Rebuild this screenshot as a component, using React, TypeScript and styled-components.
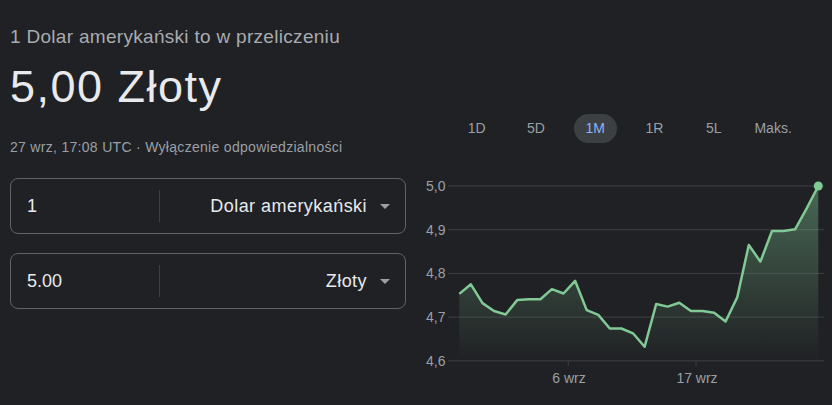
import styled, { createGlobalStyle } from 'styled-components';

const GlobalStyle = createGlobalStyle`
  html, body {
    margin: 0;
    padding: 0;
    background: #202124;
    font-family: "Liberation Sans", Arial, sans-serif;
  }
`;

const Page = styled.div`
  width: 832px;
  height: 405px;
  background: #202124;
  display: flex;
  gap: 14px;
  overflow: hidden;
`;

const LeftCol = styled.div`
  flex: none;
  width: 396px;
  padding-left: 10px;
  padding-top: 25px;
  display: flex;
  flex-direction: column;
`;

const Caption = styled.div`
  font-size: 19px;
  line-height: 24px;
  letter-spacing: 0.3px;
  color: #a8abb0;
  white-space: nowrap;
`;

const BigValue = styled.div`
  font-size: 45px;
  line-height: 52px;
  color: #e8eaed;
  margin-top: 12px;
  letter-spacing: 1.5px;
  white-space: nowrap;
`;

const Stamp = styled.div`
  font-size: 14px;
  line-height: 20px;
  letter-spacing: 0.3px;
  color: #9aa0a6;
  margin-top: 24px;
  white-space: nowrap;
`;

const Boxes = styled.div`
  margin-top: 21px;
  display: flex;
  flex-direction: column;
  gap: 19px;
`;

const Box = styled.div`
  height: 54px;
  border: 1px solid #5f6368;
  border-radius: 8px;
  display: flex;
  align-items: center;
`;

const Amount = styled.div`
  width: 132px;
  padding-left: 16px;
  font-size: 18px;
  color: #e8eaed;
  border-right: 1px solid #3c4043;
  height: 32px;
  line-height: 32px;
`;

const Unit = styled.div`
  flex: 1;
  display: flex;
  justify-content: flex-end;
  align-items: center;
  gap: 13px;
  padding-right: 15px;
  font-size: 18px;
  letter-spacing: 0.45px;
  color: #e8eaed;
`;

const Caret = styled.span`
  width: 0;
  height: 0;
  border-left: 5.5px solid transparent;
  border-right: 5.5px solid transparent;
  border-top: 5px solid #9aa0a6;
`;

const RightCol = styled.div`
  flex: 1;
  padding-top: 114px;
  display: flex;
  flex-direction: column;
`;

const Tabs = styled.div`
  display: flex;
  padding-left: 27px;
  height: 29px;
`;

const Tab = styled.div`
  width: 59.3px;
  display: flex;
  justify-content: center;
  align-items: center;
`;

const TabLabel = styled.span<{ $active?: boolean }>`
  font-size: 14px;
  height: 29px;
  line-height: 29px;
  padding: 0 ${p => (p.$active ? '12px' : '0')};
  border-radius: 15px;
  color: ${p => (p.$active ? '#8ab4f8' : '#9aa0a6')};
  background: ${p => (p.$active ? '#3c4043' : 'transparent')};
`;

const Chart = styled.svg`
  margin-top: 27px;
  display: block;
`;

const values = [
  4.753, 4.775, 4.732, 4.714, 4.706, 4.739, 4.741, 4.741, 4.764, 4.754, 4.783,
  4.716, 4.705, 4.674, 4.674, 4.663, 4.632, 4.73, 4.724, 4.733, 4.714, 4.714,
  4.71, 4.69, 4.745, 4.865, 4.827, 4.897, 4.897, 4.901, 4.949, 5.0,
];

const yOf = (v: number) => 16 + (5.0 - v) * 437;
const xOf = (i: number) => 39.3 + i * 11.58;

const tabs = ['1D', '5D', '1M', '1R', '5L', 'Maks.'];
const levels = [5.0, 4.9, 4.8, 4.7, 4.6];
const axisFont = 'Liberation Sans, Arial, sans-serif';

export default function App() {
  const pts = values.map((v, i) => `${xOf(i).toFixed(1)},${yOf(v).toFixed(1)}`);
  const line = 'M' + pts.join(' L');
  const last = values.length - 1;
  const area = `${line} L${xOf(last).toFixed(1)},${yOf(4.6)} L${xOf(0).toFixed(1)},${yOf(4.6)} Z`;

  return (
    <Page>
      <GlobalStyle />
      <LeftCol>
        <Caption>1 Dolar amerykański to w przeliczeniu</Caption>
        <BigValue>5,00 Złoty</BigValue>
        <Stamp>27 wrz, 17:08 UTC · Wyłączenie odpowiedzialności</Stamp>
        <Boxes>
          <Box>
            <Amount>1</Amount>
            <Unit>
              Dolar amerykański
              <Caret />
            </Unit>
          </Box>
          <Box>
            <Amount>5.00</Amount>
            <Unit>
              Złoty
              <Caret />
            </Unit>
          </Box>
        </Boxes>
      </LeftCol>
      <RightCol>
        <Tabs>
          {tabs.map(t => (
            <Tab key={t}>
              <TabLabel $active={t === '1M'}>{t}</TabLabel>
            </Tab>
          ))}
        </Tabs>
        <Chart width="412" height="225" viewBox="0 0 412 225">
          <defs>
            <linearGradient id="fade" x1="0" y1="16" x2="0" y2="190" gradientUnits="userSpaceOnUse">
              <stop offset="0" stopColor="#81c995" stopOpacity="0.42" />
              <stop offset="1" stopColor="#81c995" stopOpacity="0" />
            </linearGradient>
          </defs>
          {levels.map(l => (
            <g key={l}>
              <line x1="28" x2="404" y1={yOf(l)} y2={yOf(l)} stroke="#3c4043" strokeWidth="1" />
              <text x="6" y={yOf(l) + 5} fill="#9aa0a6" fontSize="14" fontFamily={axisFont}>
                {l.toFixed(1).replace('.', ',')}
              </text>
            </g>
          ))}
          <line x1="148.3" x2="148.3" y1={yOf(4.6)} y2={yOf(4.6) + 5} stroke="#3c4043" />
          <line x1="276" x2="276" y1={yOf(4.6)} y2={yOf(4.6) + 5} stroke="#3c4043" />
          <text x="149" y="213" textAnchor="middle" fill="#9aa0a6" fontSize="14" fontFamily={axisFont}>6 wrz</text>
          <text x="277" y="213" textAnchor="middle" fill="#9aa0a6" fontSize="14" fontFamily={axisFont}>17 wrz</text>
          <path d={area} fill="url(#fade)" />
          <path d={line} fill="none" stroke="#81c995" strokeWidth="2.5" strokeLinejoin="round" />
          <circle cx={xOf(last)} cy={yOf(5.0)} r="4.5" fill="#81c995" />
        </Chart>
      </RightCol>
    </Page>
  );
}
